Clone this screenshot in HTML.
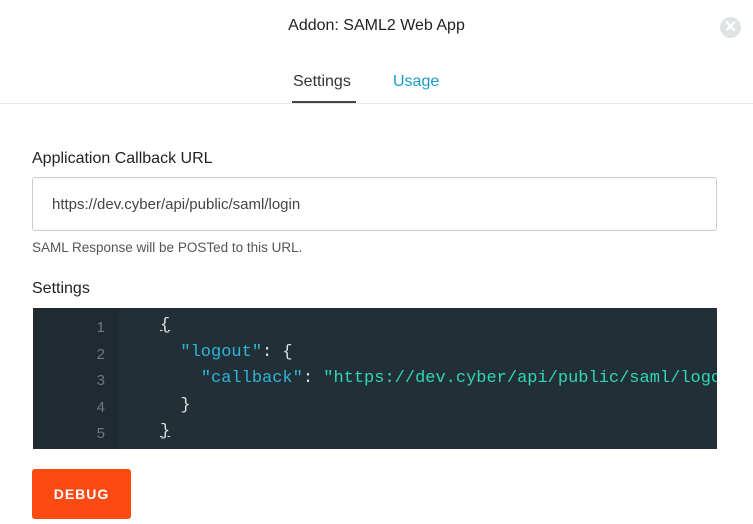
<!DOCTYPE html>
<html><head><style>
body{margin:0;width:753px;height:524px;background:#fff;font-family:"Liberation Sans",sans-serif;position:relative;overflow:hidden;color:#333}
.a{position:absolute}
.code{font-family:"Liberation Mono",monospace;font-size:17px;white-space:pre}
.ln{font-family:"Liberation Sans",sans-serif;font-size:15px;color:#6b7a80;width:72px;text-align:right}
</style></head><body>
<div class="a" style="top:17px;left:0;width:753px;text-align:center;font-size:16px;color:#222">Addon: SAML2 Web App</div>
<div class="a" style="left:720px;top:17px;width:21px;height:21px;border-radius:50%;background:#dfe3e6;color:#fff;font-size:16px;font-weight:bold;text-align:center;line-height:21px">✕</div>
<div class="a" style="left:293px;top:73px;font-size:16px;color:#333">Settings</div>
<div class="a" style="left:292px;top:101px;width:64px;height:2px;background:#444"></div>
<div class="a" style="left:393px;top:73px;font-size:16px;color:#1a9ac8">Usage</div>
<div class="a" style="left:0;top:103px;width:753px;height:1px;background:#e6e6e6"></div>
<div class="a" style="left:32px;top:150px;font-size:16px;color:#222">Application Callback URL</div>
<div class="a" style="left:32px;top:177px;width:685px;height:54px;border:1px solid #ccc;border-radius:3px;box-sizing:border-box"></div>
<div class="a" style="left:52px;top:196px;font-size:15px;color:#444">https://dev.cyber/api/public/saml/login</div>
<div class="a" style="left:32px;top:240px;font-size:13.5px;color:#555">SAML Response will be POSTed to this URL.</div>
<div class="a" style="left:32px;top:280px;font-size:16px;color:#222">Settings</div>
<div class="a" style="left:33px;top:308px;width:684px;height:141px;background:#222f36;overflow:hidden">
<div class="a" style="left:0;top:0;width:86px;height:141px;background:#1f2b31"></div>
<div class="a ln" style="left:0;top:7px;line-height:26.5px">1<br>2<br>3<br>4<br>5</div>
<div class="a code" style="left:127px;top:5px;line-height:26.5px;color:#e0e0e0"><span style="text-decoration:underline">{</span>
  <span style="color:#2eb5d8">"logout"</span>: {
    <span style="color:#2eb5d8">"callback"</span>: <span style="color:#2ed8b5">"https://dev.cyber/api/public/saml/logout"</span>
  }
<span style="text-decoration:underline">}</span></div>
</div>
<div class="a" style="left:32px;top:469px;width:99px;height:50px;background:#fc4a12;border-radius:3px;color:#fff;font-size:14px;font-weight:bold;letter-spacing:1px;text-align:center;line-height:50px">DEBUG</div>
</body></html>
